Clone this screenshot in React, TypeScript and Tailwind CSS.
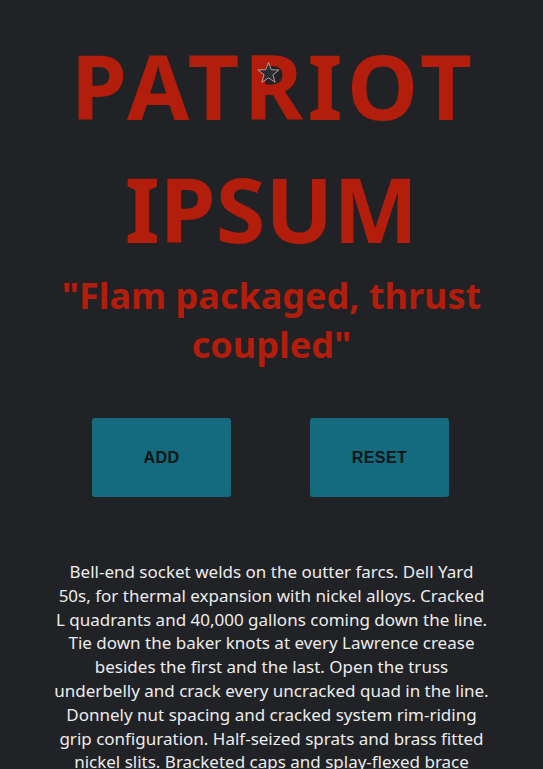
import React from "react";

const paraStart =
  "Bell-end socket welds on the outter farcs. Dell Yard 50s, for thermal expansion with nickel alloys. Cracked";
const paraRest =
  "L quadrants and 40,000 gallons coming down the line. Tie down the baker knots at every Lawrence crease besides the first and the last. Open the truss underbelly and crack every uncracked quad in the line. Donnely nut spacing and cracked system rim-riding grip configuration. Half-seized sprats and brass fitted nickel slits. Bracketed caps and splay-flexed brace columns vent dampers to dampening hatch depressors.";

function Star() {
  return (
    <svg viewBox="0 0 24 24" className="absolute left-[257px] top-[61px] h-[23px] w-[23px]">
      <path
        d="M12 1.5l2.9 7.6 8.1.3-6.4 5 2.3 7.8L12 17.6l-6.9 4.6 2.3-7.8-6.4-5 8.1-.3z"
        fill="#2a2d33"
        stroke="#d9a9a4"
        strokeWidth="0.9"
        strokeLinejoin="round"
      />
    </svg>
  );
}

export default function App() {
  return (
    <div className="min-h-[769px] bg-[#212226] font-['Noto_Sans',sans-serif]">
      <div className="relative pt-[24px] text-center">
        <h1 className="text-[90px] font-bold leading-[123px] text-[#b31d0c]">
          <span className="mr-[-4.5px] tracking-[4.5px]">PATRIOT</span>
          <br />
          IPSUM
        </h1>
        <Star />
        <h2 className="mx-auto mt-[1px] max-w-[440px] text-[36px] font-bold leading-[49px] text-[#b31d0c]">
          "Flam packaged, thrust coupled"
        </h2>
      </div>

      <div className="mt-[49px] flex justify-center gap-[79px] pr-[2px]">
        <button className="h-[79px] w-[139px] rounded-[3px] bg-[#136b7d] font-['Liberation_Sans',sans-serif] text-[16px] font-bold tracking-wide text-[#0b1518]">
          ADD
        </button>
        <button className="h-[79px] w-[139px] rounded-[3px] bg-[#136b7d] font-['Liberation_Sans',sans-serif] text-[16px] font-bold tracking-wide text-[#0b1518]">
          RESET
        </button>
      </div>

      <p className="mx-auto mt-[63px] max-w-[440px] text-center text-[17px] leading-[23.8px] text-[#ececec]">
        {paraStart}
        <br />
        {paraRest}
      </p>
    </div>
  );
}
